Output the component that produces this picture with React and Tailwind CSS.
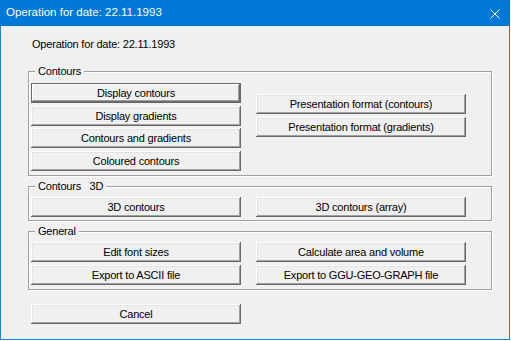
import React from "react";

const FONT = { fontFamily: '"Liberation Sans", Arial, sans-serif' };

function Btn({ children, primary, className = "" }) {
  return (
    <div
      className={`h-[20px] w-[210px] flex items-center justify-center bg-[#f0f0f0] text-black text-[11px] tracking-[-0.2px] leading-none ${
        primary
          ? "border border-[#696969] shadow-[inset_-1px_-1px_0_#696969,inset_1px_1px_0_#fff,inset_-2px_-2px_0_#a0a0a0]"
          : "shadow-[inset_-1px_-1px_0_#696969,inset_1px_1px_0_#fff,inset_-2px_-2px_0_#a0a0a0,inset_2px_2px_0_#e3e3e3]"
      } ${className}`}
    >
      <span className="whitespace-pre">{children}</span>
    </div>
  );
}

function Group({ label, className = "", children }) {
  return (
    <div
      className={`relative w-[464px] border border-[#a0a0a0] shadow-[inset_1px_1px_0_#fff,1px_1px_0_#fff] ${className}`}
    >
      <span className="absolute left-[6px] top-[-8px] bg-[#f0f0f0] px-[3px] text-[11px] leading-[14px] tracking-[-0.2px] whitespace-pre text-black">
        {label}
      </span>
      {children}
    </div>
  );
}

export default function App() {
  return (
    <div className="w-[511px] h-[341px] bg-white" style={FONT}>
      <div className="w-[510px] h-[340px] flex flex-col border-x border-b border-[#1883d7] bg-[#f0f0f0]">
        {/* Title bar */}
        <div className="h-[26px] -mx-px bg-[#0078d7] flex items-center justify-between pl-[6px] pr-[10px]">
          <span className="text-white text-[11.5px]">Operation for date: 22.11.1993</span>
          <svg width="10" height="10" viewBox="0 0 10 10" className="mt-[1px]">
            <path d="M0.5 0.5 L9.5 9.5 M9.5 0.5 L0.5 9.5" stroke="#fff" strokeWidth="1" />
          </svg>
        </div>

        {/* Body */}
        <div className="flex-1 pl-[27px] pt-[11px]">
          <p className="text-[11px] leading-[14px] tracking-[-0.2px] text-black pl-[4px]">
            Operation for date: 22.11.1993
          </p>

          {/* Contours */}
          <Group label="Contours" className="mt-[20px] pt-[11px] pb-[4px] pl-[2px]">
            <div className="flex gap-[15px]">
              <div className="flex flex-col">
                <Btn primary>Display contours</Btn>
                <Btn className="mt-[3px]">Display gradients</Btn>
                <Btn className="mt-[2px]">Contours and gradients</Btn>
                <Btn className="mt-[3px]">Coloured contours</Btn>
              </div>
              <div className="flex flex-col gap-[3px] mt-[11px]">
                <Btn>Presentation format (contours)</Btn>
                <Btn>Presentation format (gradients)</Btn>
              </div>
            </div>
          </Group>

          {/* Contours 3D */}
          <Group label="Contours   3D" className="mt-[10px] pt-[10px] pb-[3px] pl-[2px]">
            <div className="flex gap-[15px]">
              <Btn>3D contours</Btn>
              <Btn>3D contours (array)</Btn>
            </div>
          </Group>

          {/* General */}
          <Group label="General" className="mt-[10px] pt-[10px] pb-[4px] pl-[2px]">
            <div className="flex gap-[15px]">
              <div className="flex flex-col gap-[3px]">
                <Btn>Edit font sizes</Btn>
                <Btn>Export to ASCII file</Btn>
              </div>
              <div className="flex flex-col gap-[3px]">
                <Btn>Calculate area and volume</Btn>
                <Btn>Export to GGU-GEO-GRAPH file</Btn>
              </div>
            </div>
          </Group>

          <div className="mt-[14px] pl-[3px]">
            <Btn>Cancel</Btn>
          </div>
        </div>
      </div>
    </div>
  );
}
